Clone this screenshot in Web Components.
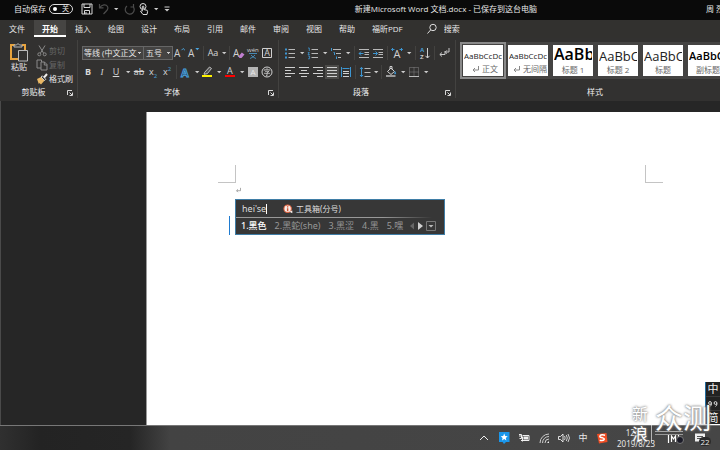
<!DOCTYPE html>
<html lang="zh-CN">
<head>
<meta charset="utf-8">
<meta name="viewport" content="width=device-width, initial-scale=1">
<title>新建Microsoft Word 文档.docx</title>
<style>
html,body{margin:0;height:100%}
body{font-family:"Open Sans","Noto Sans CJK SC",sans-serif;font-size:8px;line-height:12px;color:#e8e8e8;background:#262626;overflow:hidden}
</style>
</head>
<body>
<word-app></word-app>
<script>
const ICONS = {
  caret:'<path d="M5 6h4.4L7.2 8.3z" fill="#ccc"/>',
  save:'<path d="M2 2h10v10H2zM4 2v3.5h6V2M4.5 12V8.5h5V12M6 10v2" fill="none" stroke="#d8d8d8"/>',
  undo:'<path d="M2.5 2v3.8h4M2.8 5.5C5 2.500 9 2 10.500 4.500c1.200 2.200 0 3.500-4 7.500" fill="none" stroke="#4c4c4c" stroke-width="1.200"/>',
  redo:'<path d="M10.500 2v3h-3M10 4.500a4.500 4.500 0 1 1-6-.5" fill="none" stroke="#4c4c4c" stroke-width="1.200"/>',
  touch:'<circle cx="6" cy="4.500" r="3" fill="none" stroke="#ddd"/><path d="M5.300 9V4.500q.8-1 1.500 0v3l3.300.8q.7.300.5 1.200L10 12.500H6L3.500 9.300q.6-1 1.800.2" fill="#0a0a0a" stroke="#ddd"/>',
  custom:'<path d="M4.500 5h5" stroke="#ccc"/><path d="M4.500 7h5L7 9.600z" fill="#ccc"/>',
  search:'<circle cx="8" cy="5.500" r="3.200" fill="none" stroke="#ddd"/><path d="M5.700 7.900L2.500 11.500" stroke="#ddd"/>',
  cut:'<path d="M4 1.500l4.500 7.500M10 1.500L5.500 9" stroke="#8a8a8a" fill="none"/><circle cx="4.300" cy="10.300" r="1.500" fill="none" stroke="#8a8a8a"/><circle cx="9.700" cy="10.300" r="1.500" fill="none" stroke="#8a8a8a"/>',
  copy:'<path d="M6 10H2V2h4.500v2M6 4h3.500L12 6.500V12H6zM9.300 4v3H12" fill="none" stroke="#8a8a8a"/>',
  painter:'<path d="M2 7l4-2 3.500 3.500L6 12.500 4.500 11 3.800 12z" fill="#e8b765"/><path d="M6 5l1.300-1.200 3.500 3.500L9.500 8.500z" fill="#333" stroke="#eee" stroke-width=".8"/><path d="M9 5.500l3-3.500" stroke="#eee" stroke-width="2"/>',
  grow:'<text x="1" y="11" font-size="10">A</text><path d="M8.500 4.200l1.700-1.700 1.700 1.700" fill="none" stroke="#4aa3dd"/>',
  shrink:'<text x="1" y="11" font-size="10">A</text><path d="M8.300 2h4L10.300 4.300z" fill="#4aa3dd"/>',
  clear:'<text x="1" y="10.500" font-size="10">A</text><path d="M6.500 10.500l3.300-4 2.700 2-3 3.500H7.500z" fill="#c07fd0"/>',
  pinyin:'<text x="1" y="5.500" font-size="6">wén</text><path d="M3 7.500h8M5 9q2 2.500 5 3.500M9 9q-2 2.500-5 3.500" fill="none" stroke="#4a93c4" stroke-width=".9"/>',
  abox:'<path d="M2.500 2.500h9v9h-9z" fill="none" stroke="#d0d0d0"/><text x="4.200" y="10.300" font-size="9">A</text>',
  fx:'<text x="2" y="11.500" font-size="11" font-weight="bold" fill="#243b4c" stroke="#4aa3e0" stroke-width=".9">A</text>',
  hilite:'<path d="M4.500 7.500L9.500 2l2 1.500-4.200 5.200-3.300.6z" fill="#555" stroke="#ccc" stroke-width=".9"/><path d="M2 10h10v2H2z" fill="#fff200"/>',
  fcolor:'<text x="4" y="8.800" font-size="9">A</text><path d="M2 10h10v2H2z" fill="#f00"/>',
  shade:'<path d="M2 2h10v10H2z" fill="#b4b4b4"/><text x="4.400" y="10" font-size="8" fill="#e8e8e8">A</text>',
  circ:'<circle cx="7" cy="7" r="5" fill="none" stroke="#d0d0d0"/><path d="M7 3.200v1.300M4.200 5.700V4.800h5.600v.9M5 6.300h4L7 7.800M4 8.300h6M7 7.800v3L6 10.500" fill="none" stroke="#d0d0d0" stroke-width=".8"/>',
  bullets:'<path d="M5.500 3.500H12M5.500 7.500H12M5.500 11.500H12" stroke="#b8b8b8"/><path d="M2 2.500h2v2H2zM2 6.500h2v2H2zM2 10.500h2v2H2z" fill="#3d96d2"/>',
  numbers:'<path d="M5.500 3.500H12M5.500 7.500H12M5.500 11.500H12" stroke="#b8b8b8"/><path d="M2 2h1.300v3M1.800 6.500h1.500L2 8.500h1.800M2 10h1.600v2.800H2" fill="none" stroke="#3d96d2" stroke-width=".8"/>',
  multi:'<path d="M4 3.500h8M7 7.500h5M9 11.500h3" stroke="#b8b8b8"/><path d="M2.500 2v3M4.500 6.500h1v2.500M7.500 10.500v2.500" fill="none" stroke="#3d96d2"/>',
  outdent:'<path d="M2 3.500h10M7.500 6.500h4.500M7.500 8.500h4.500M2 11.500h10" stroke="#b8b8b8"/><path d="M2 7.500h4.500M4 5.500L2.200 7.500 4 9.500" fill="none" stroke="#3d96d2"/>',
  indent:'<path d="M2 3.500h10M7.500 6.500h4.500M7.500 8.500h4.500M2 11.500h10" stroke="#b8b8b8"/><path d="M2 7.500h4.500M4.600 5.500l1.800 2L4.600 9.500" fill="none" stroke="#3d96d2"/>',
  dist:'<text x="3.500" y="12" font-size="11">A</text><path d="M1.500 3.500h3M3 2L1.500 3.500 3 5M12.500 3.500h-3M11 2l1.500 1.500L11 5" fill="none" stroke="#3d96d2"/>',
  sort:'<g font-family="Liberation Sans" font-size="6" font-weight="bold"><text x="2" y="6" fill="#4aa3dd">A</text><text x="2" y="13">Z</text></g><path d="M9.500 2v10M7.500 9.800l2 2.200 2-2.200" fill="none" stroke="#d0d0d0"/>',
  marks:'<path d="M12 2v4H8.500M10 4.300L8.300 6 10 7.700M8 5v3.500H3M5 6.500L2.800 8.500 5 10.500" fill="none" stroke="#c8c8c8"/>',
  left:'<path d="M2 2.500h10M2 5.500h6M2 8.500h10M2 11.500h6" stroke="#d0d0d0"/>',
  center:'<path d="M2 2.500h10M4 5.500h6M2 8.500h10M4 11.500h6" stroke="#d0d0d0"/>',
  right:'<path d="M2 2.500h10M6 5.500h6M2 8.500h10M6 11.500h6" stroke="#d0d0d0"/>',
  just:'<path d="M2 2.500h10M2 5.500h10M2 8.500h10M2 11.500h10" stroke="#d0d0d0"/>',
  distrib:'<path d="M2.500 2v10M11.500 2v10" stroke="#3d96d2"/><path d="M3.500 3.500h7" stroke="#3d96d2"/><path d="M4 6.500h6M4 8.500h6M4 11.500h6" stroke="#d0d0d0"/>',
  spacing:'<path d="M6.500 3.500h6M6.500 7.500h6M6.500 11.500h6" stroke="#b8b8b8"/><path d="M3.500 2.500v9M2 4l1.500-1.700L5 4M2 10l1.500 1.700L5 10" fill="none" stroke="#3d96d2"/>',
  bucket:'<path d="M3.500 6.500L7 3l3.500 3.500L7 9.500zM6 4V1.500h2v3" fill="none" stroke="#d0d0d0"/><path d="M11 6q2 2.500.4 3.300T10.500 7" fill="#3d96d2"/><path d="M2 10h9.500v2H2z" fill="#999"/>',
  borders:'<path d="M2.500 2.500h9v9h-9zM7 2.500v9M2.500 7h9" fill="none" stroke="#858585" stroke-dasharray="1 1"/><path d="M2 11.500h10" stroke="#bbb"/>',
  launch:'<path d="M4.500 9V4.500H9" fill="none" stroke="#d8d8d8"/><path d="M6.500 6.500l2.500 2.500M9.500 6.500v3h-3" fill="none" stroke="#d8d8d8"/>',
  up:'<path d="M3 9l4-4 4 4" fill="none" stroke="#eee"/>',
  star:'<path d="M2 1h10.500v10H9l-2 2-1.500-2H2z" fill="#1a96ea"/><path d="M7.200 2.500l1 2.500 2.500.2-1.900 1.700.6 2.500-2.200-1.400L5 9.400l.6-2.500-1.900-1.700 2.500-.2z" fill="#fff"/>',
  battery:'<path d="M2 5h3M2 3.500h2.500v4h-2M5.500 5.500v5" stroke="#eee" fill="none"/><path d="M5.500 4.500H12v5H4" fill="none" stroke="#eee"/><path d="M6.500 5.500h4.500v3H6.500z" fill="#eee"/>',
  wifi:'<path d="M3 12A9 9 0 0 1 12 3M5.500 12A6.500 6.500 0 0 1 12 5.500M8 12a4 4 0 0 1 4-4" fill="none" stroke="#ccc"/><path d="M10 12l2-2v2z" fill="#eee"/>',
  volume:'<path d="M1.500 5.500h2L6 3v8L3.500 8.500h-2z" fill="none" stroke="#eee" stroke-width=".9"/><path d="M7.500 5q1.300 2 0 4M9.300 4q2 3 0 6M11 3q3 4 0 8" fill="none" stroke="#ddd" stroke-width=".9"/>',
  sogou:'<path d="M2 3l9.500-1L12.500 11 4 12.500z" fill="#f04d23"/><path d="M10 4.200q-4-1-5 .6t2.500 2q2.500.8 1.500 2t-4.300.4" fill="none" stroke="#fff" stroke-width="1.400"/>',
  mtray:'<path d="M1.500 3v9M11.500 3v9M4.500 11V5l2 3 2-3v6" fill="none" stroke="#fff" stroke-width="1.200"/>',
  note:'<path d="M2 2.500h10v8H8l-2 2v-2H2z" fill="#eee"/><path d="M4 5.500h6M4 7.500h6" stroke="#555"/>',
  tool:'<circle cx="6.500" cy="6.500" r="5.200" fill="#f8efeb" stroke="#e0623e" stroke-width="1.500"/><path d="M6.500 3v1.800M6.500 5.800v4" stroke="#d4502e" stroke-width="2"/><path d="M9 11l4 2V9z" fill="#f8efeb"/>',
  prev:'<path d="M9 3.500v7L5 7z" fill="#666"/>',
  next:'<path d="M5 3v8l5-4z" fill="#d0d0d0"/>',
  more:'<path d="M2.500 2.500h9v9h-9z" fill="none" stroke="#777"/><path d="M4.500 6h5L7 8.500z" fill="#bbb"/>',
  enter:'<path d="M10.500 4v4H5M7 6L5 8l2 2" fill="none" stroke="#888"/>'
};
function define(name, css, html, ready){
  const t = document.createElement('template');
  t.innerHTML = '<style>*{box-sizing:border-box}button,input,select{font:inherit;color:inherit;background:none;border:0;margin:0;padding:0}' + css + '</style>' + html;
  customElements.define(name, class extends HTMLElement{
    constructor(){ super(); this.attachShadow({mode:'open'}).append(t.content.cloneNode(true)); }
    connectedCallback(){ if(ready) ready(this, this.shadowRoot); }
  });
}

define('ui-icon', `:host{display:block;width:14px;height:14px;flex:none}svg{display:block;width:100%;height:100%;fill:#d0d0d0;font-family:"Open Sans",sans-serif}`,
  '<svg viewBox="0 0 14 14" aria-hidden="true"></svg>',
  (el,r)=>{ r.querySelector('svg').innerHTML = ICONS[el.getAttribute('name')]; });

define('tool-button', `:host{display:block;flex:none;width:14px}
  :host([slim]){width:9px}:host([thin]){width:7px}
  button{display:flex;align-items:center;justify-content:center;width:100%;height:14px;line-height:14px;overflow:visible;font-size:9px;color:#d8d8d8}
  :host([on]) button{background:#4b4a48}`,
  '<button type="button"><slot></slot></button>',
  (el,r)=>{
    const b=r.querySelector('button'); b.setAttribute('aria-label', el.getAttribute('label')||'更多');
    const n=el.getAttribute('icon')||((el.hasAttribute('slim')||el.hasAttribute('thin'))?'caret':null);
    if(n && !b.querySelector('ui-icon')){ const i=document.createElement('ui-icon'); i.setAttribute('name',n); b.append(i); }
  });

define('tool-sep', ':host{display:block;flex:none;width:1px;height:14px;margin:0 2px;background:#434240}', '');

define('title-bar', `:host{display:flex;align-items:center;height:20px;background:#0a0a0a;padding-bottom:2px;white-space:nowrap;overflow:hidden}
  .l{flex:352 1 0;display:flex;align-items:center;padding-left:14px}
  .r{flex:189 1 0;display:flex;justify-content:flex-end;min-width:0}
  .r span{margin-right:-4px}
  label{display:flex;align-items:center;gap:3px;margin-right:7px}
  .sw{position:relative;display:flex;width:24px;height:10px;border:1px solid #ddd;border-radius:5px;align-items:center;justify-content:flex-end;padding-right:3px;font-size:7px;line-height:8px}
  .sw input{appearance:none;position:absolute;inset:0}
  .sw::before{content:"";width:4px;height:4px;border-radius:2px;background:#fff;margin-right:auto;margin-left:3px}
  .g{width:3px}`,
  `<div class="l"><label>自动保存<span class="sw"><input type="checkbox">关</span></label>
  <tool-button icon="save" label="保存"></tool-button><span class="g"></span>
  <tool-button icon="undo" label="撤消"></tool-button><tool-button slim></tool-button><span class="g"></span>
  <tool-button icon="redo" label="恢复"></tool-button>
  <tool-button icon="touch" label="触摸模式"></tool-button><tool-button slim></tool-button>
  <tool-button icon="custom" label="自定义"></tool-button></div>
  <span>新建Microsoft Word 文档.docx - 已保存到这台电脑</span><div class="r"><span>周 烈</span></div>`);

define('tab-bar', `:host{display:flex;height:18px;background:#32312f;padding-left:1px;gap:1px;white-space:nowrap}
  button{padding:0 8px;height:17px;line-height:17px}
  .on{background:#464543;font-weight:bold;border-bottom:2px solid #fff;color:#fff}
  label{display:flex;align-items:center;gap:5px;margin-left:13px;height:17px}
  input{width:60px;outline:0}input::placeholder{color:#e8e8e8;opacity:1}`,
  `<button>文件</button><button class="on">开始</button><button>插入</button><button>绘图</button><button>设计</button><button>布局</button><button>引用</button><button>邮件</button><button>审阅</button><button>视图</button><button>帮助</button><button>福昕PDF</button>
  <label><ui-icon name="search"></ui-icon><input type="text" aria-label="搜索" placeholder="搜索"></label>`);

define('ribbon-group', `:host{display:flex;flex-direction:column;flex:none;border-right:1px solid #434240;padding:4px 4px 0;height:58px}
  :host([wide]){flex:1 1 0;min-width:0;border:0}
  .c{height:37px;display:flex;flex-direction:column;gap:1px}
  .f{display:flex;margin-top:5px;height:12px;align-items:center}
  .f span{flex:1;text-align:center;color:#f0f0f0;padding-right:12px}
  :host([wide]) .f span{padding:0 0 0 14px}
  .f tool-button{margin:2px -4px 0 -10px}`,
  '<div class="c"><slot></slot></div><div class="f"><span></span></div>',
  (el,r)=>{ r.querySelector('span').textContent=el.getAttribute('label');
    if(!el.hasAttribute('wide')){ const b=document.createElement('tool-button'); b.setAttribute('icon','launch'); b.setAttribute('label',el.getAttribute('label')+'选项'); r.querySelector('.f').append(b);} });

define('style-card', `:host{display:block;flex:none;width:40px}
  button{display:flex;flex-direction:column;width:100%;height:31px;background:#fff;color:#666;overflow:hidden;align-items:center;padding:0 1px}
  b{font-weight:normal;color:#222;height:20px;line-height:22px;width:100%;overflow:hidden;white-space:nowrap;text-align:left;font-size:var(--s,8px)}
  span{line-height:10px;display:flex;align-items:center;white-space:nowrap}
  ui-icon{width:8px;height:8px}
  :host([on]) button{outline:2px solid #8a8a8a;outline-offset:1px}
  :host([heavy]) b{font-weight:600;color:#000}
  :host([xl]){--s:16px}:host([xl]) b{line-height:19px}:host([lg]){--s:13px}:host([md]){--s:11px}`,
  '<button type="button"><b></b><span><slot></slot></span></button>',
  (el,r)=>{ r.querySelector('b').textContent=el.getAttribute('sample'); });

define('word-ribbon', `:host{display:flex;height:63px;background:#323130;padding:2px 0 0 2px;overflow:hidden}
  .row{display:flex;align-items:center;height:18px}
  .clip{display:flex;gap:5px;padding-left:2px}
  .clip .big{display:flex;flex-direction:column;align-items:center;width:22px;line-height:10px;height:36px}
  .big svg{width:20px;height:20px;flex:none;margin-top:-2px}
  .big ui-icon{height:8px}
  .col{display:flex;flex-direction:column}
  .col button{display:flex;align-items:center;height:14px;line-height:14px;gap:0;text-align:left}
  .dim{color:#666}
  select{appearance:none;border:1px solid #666;background:#444342;height:14px;line-height:12px;padding:0 6px 0 1px;flex:none;background-image:linear-gradient(45deg,transparent 50%,#ccc 50%),linear-gradient(-45deg,transparent 50%,#ccc 50%);background-size:2px 2px;background-repeat:no-repeat;background-position:right 3px center,right 1px center}
  .fn{width:62px}.fs{width:30px;margin-left:-1px;padding-left:2px}
  .gal{display:flex;flex:none;gap:5px;background:#444342;padding:3px 0 3px 3px;margin:-2px -4px 0 0;overflow:hidden}
  sub,sup{font-size:6px;line-height:0;color:#4aa3dd}
  .in{margin-left:-1px}`,
  `<ribbon-group label="剪贴板" style="width:76px"><div class="clip">
    <button class="big"><svg viewBox="0 0 20 20"><path d="M6 3H2v14h7M13 3h3v5" fill="none" stroke="#e8a33d" stroke-width="2"/><path d="M5 5V3h2.500q1.500-3 3 0H13v2z" fill="#333" stroke="#bbb"/><path d="M9.500 8.500h9v10.500h-9z" fill="#323130" stroke="#bbb"/></svg>粘贴<ui-icon name="caret"></ui-icon></button>
    <div class="col"><button class="dim"><ui-icon name="cut"></ui-icon>剪切</button><button class="dim"><ui-icon name="copy"></ui-icon>复制</button><button><ui-icon name="painter"></ui-icon>格式刷</button></div></div></ribbon-group>
  <ribbon-group label="字体" style="width:201px">
    <div class="row"><select class="fn" aria-label="字体"><option>等线 (中文正文</option></select><select class="fs" aria-label="字号"><option>五号</option></select>
     <tool-button icon="grow" label="增大字号"></tool-button><tool-button icon="shrink" label="减小字号"></tool-button><tool-sep></tool-sep><tool-button label="更改大小写">Aa</tool-button><tool-button thin></tool-button><tool-sep></tool-sep><tool-button icon="clear" label="清除格式"></tool-button><tool-button icon="pinyin" label="拼音指南"></tool-button><tool-button icon="abox" label="字符边框"></tool-button></div>
    <div class="row in"><tool-button label="加粗"><b>B</b></tool-button><tool-button label="倾斜"><i style="font-family:'Liberation Serif',serif">I</i></tool-button><tool-button label="下划线"><u>U</u></tool-button><tool-button slim></tool-button><tool-button label="删除线"><s>ab</s></tool-button><tool-button label="下标"><span>x<sub>2</sub></span></tool-button><tool-button label="上标"><span>x<sup>2</sup></span></tool-button><tool-sep></tool-sep><tool-button icon="fx" label="文本效果"></tool-button><tool-button thin></tool-button><tool-button icon="hilite" label="突出显示"></tool-button><tool-button slim></tool-button><tool-button icon="fcolor" label="字体颜色"></tool-button><tool-button slim></tool-button><tool-button icon="shade" label="字符底纹"></tool-button><tool-button icon="circ" label="带圈字符"></tool-button></div>
  </ribbon-group>
  <ribbon-group label="段落" style="width:177px">
    <div class="row"><tool-button icon="bullets" label="项目符号"></tool-button><tool-button slim></tool-button><tool-button icon="numbers" label="编号"></tool-button><tool-button slim></tool-button><tool-button icon="multi" label="多级列表"></tool-button><tool-button slim></tool-button><tool-sep></tool-sep><tool-button icon="outdent" label="减少缩进"></tool-button><tool-button icon="indent" label="增加缩进"></tool-button><tool-sep></tool-sep><tool-button icon="dist" label="中文版式"></tool-button><tool-button slim></tool-button><tool-sep></tool-sep><tool-button icon="sort" label="排序"></tool-button><tool-sep></tool-sep><tool-button icon="marks" label="编辑标记"></tool-button></div>
    <div class="row"><tool-button icon="left" label="左对齐"></tool-button><tool-button icon="center" label="居中"></tool-button><tool-button icon="right" label="右对齐"></tool-button><tool-button on icon="just" label="两端对齐"></tool-button><tool-button icon="distrib" label="分散对齐"></tool-button><tool-sep></tool-sep><tool-button icon="spacing" label="行距"></tool-button><tool-button thin></tool-button><tool-sep></tool-sep><tool-button icon="bucket" label="底纹"></tool-button><tool-button slim></tool-button><tool-button icon="borders" label="边框"></tool-button><tool-button slim></tool-button></div>
  </ribbon-group>
  <ribbon-group wide label="样式"><div class="gal"><style-card on sample="AaBbCcDc"><ui-icon name="enter"></ui-icon>正文</style-card><style-card sample="AaBbCcDc"><ui-icon name="enter"></ui-icon>无间隔</style-card><style-card xl heavy sample="AaBb">标题 1</style-card><style-card lg sample="AaBbC">标题 2</style-card><style-card lg sample="AaBbC">标题</style-card><style-card md heavy sample="AaBbC">副标题</style-card></div></ribbon-group>`);

define('ime-popup', `:host{display:block;width:210px;height:36px;background:#373737;border:1px solid #3f7da6;color:#989898;white-space:nowrap;font-family:"Noto Sans","Noto Sans CJK SC",sans-serif}
  .t{display:flex;align-items:center;height:17px;padding-left:6px}
  .in{display:flex;align-items:center;width:41px;font-size:9px;color:#ddd}
  .in i{width:1px;height:10px;background:#fff}
  .t ui-icon{width:10px;height:10px;margin-right:3px}.t span{color:#ddd}
  hr{margin:0 12px 0 0;border:0;height:1px;background:linear-gradient(90deg,#999 75%,#373737)}
  .c{display:flex;align-items:center;height:15px;padding-left:5px;gap:8px;font-size:9px}
  .c button{line-height:14px}.c .on{color:#fff;font-weight:500}
  nav{display:flex;align-items:center;margin-left:-3px}nav tool-button:nth-child(-n+2){width:8px}`,
  `<div class="t"><div class="in">hei'se<i></i></div><ui-icon name="tool"></ui-icon><span>工具箱(分号)</span></div><hr>
  <div class="c"><button class="on">1.黑色</button><button>2.黑蛇(she)</button><button>3.黑涩</button><button>4.黑</button><button>5.嘿</button><nav><tool-button icon="prev" label="上一页"></tool-button><tool-button icon="next" label="下一页"></tool-button><tool-button icon="more" label="更多"></tool-button></nav></div>`);

define('doc-area', `:host{display:flex;flex:1;min-height:0;background:#262626;border-left:1px solid #4a4a4a;padding:11px 0 0 145px;border-top:0}
  .p{flex:1;background:#fff;border-left:1px solid #999;padding:53px 57px 0 71px;position:relative}
  .m{display:flex;justify-content:space-between}
  .m i{width:18px;height:18px;border:1px solid #c4c4c4;border-width:0 1px 1px 0}
  .m i+i{border-width:0 0 1px 1px}
  .e{margin:0 0 0 15px}
  ui-icon{width:10px;height:14px}
  ime-popup{position:absolute;left:88px;top:87px}
  .bar{position:absolute;left:82px;top:104px;width:1px;height:19px;background:#1f7bd0}`,
  `<div class="p"><div class="m"><i></i><i></i></div><div class="e"><ui-icon name="enter"></ui-icon></div><div class="bar"></div><ime-popup></ime-popup></div>`);

define('task-bar', `:host{display:flex;height:25px;border-top:1px solid #777;align-items:center;justify-content:flex-end;padding-right:13px;background:linear-gradient(90deg,#303030,#232323 40px,#252525 130px,#434343 170px,#464646)}
  .i{display:flex;gap:6px;align-items:center}
  .i span{width:12px;text-align:center;font-size:9px}
  .i{margin-right:6px}
  time{text-align:center;line-height:11px;width:40px;margin-left:7px;margin-right:11px;font-family:"Noto Sans",sans-serif}
  .x{display:flex;gap:12px;position:relative}
  .d{position:absolute;left:9px;top:5px;width:8px;height:8px;border-radius:4px;background:#1b1b28;border:1px solid #777}
  .n{position:absolute;right:-4px;top:6px;min-width:12px;height:9px;line-height:9px;border-radius:5px;background:#2a2a2a;text-align:center;font-size:8px}`,
  `<div class="i"><tool-button icon="up" label="显示隐藏的图标"></tool-button><tool-button icon="star" label="星标"></tool-button><tool-button icon="battery" label="电源"></tool-button><tool-button icon="wifi" label="网络"></tool-button><tool-button icon="volume" label="音量"></tool-button><span>中</span></div>
  <tool-button icon="sogou" label="搜狗"></tool-button><time>12:22<br>2019/8/23</time>
  <div class="x"><tool-button icon="mtray" label="M"></tool-button><i class="d"></i><tool-button icon="note" label="通知"></tool-button><span class="n">22</span></div>`);

define('ime-strip', `:host{display:flex;flex-direction:column;width:15px;height:42px;background:#222;border-left:1px solid #246ea0;font-size:11px;line-height:14px;text-align:center;color:#eee}
  span{height:14px}span+span{border-top:1px solid #3a3a3a}svg{display:block;margin:4px auto;width:10px;height:6px}`,
  `<span>中</span><span><svg viewBox="0 0 10 6" fill="none" stroke="#ddd"><circle cx="2" cy="2" r="1.400"/><circle cx="7.500" cy="2" r="1.400"/><path d="M3.500 2.500q0 2-1.500 3M9 2.500q0 2-1.500 3"/></svg></span><span>简</span>`);

define('brand-mark', `:host{display:flex;color:#fff;text-shadow:0 0 2px #777,0 0 3px #999;font-family:"Noto Sans CJK SC",sans-serif;font-weight:400}
  .s{width:16px;font-size:16px;line-height:20px;margin-right:3px}
  .b{border-left:1px solid rgba(255,255,255,.6);padding-left:3px;font-size:28px;line-height:28px;white-space:nowrap;font-weight:400}
  hr{margin:0;border:0;width:28px;height:4px;border-top:1px solid #aaa;border-bottom:1px solid #999}`,
  '<div class="s">新浪</div><div class="b">众测<hr></div>');

define('word-app', `:host{display:flex;flex-direction:column;height:100vh;position:relative;overflow:hidden}
  ime-strip{position:absolute;right:0;bottom:26px}
  brand-mark{position:absolute;right:9px;bottom:7px;pointer-events:none}`,
  '<title-bar></title-bar><tab-bar></tab-bar><word-ribbon></word-ribbon><doc-area></doc-area><task-bar></task-bar><ime-strip></ime-strip><brand-mark></brand-mark>');
</script>
</body>
</html>
